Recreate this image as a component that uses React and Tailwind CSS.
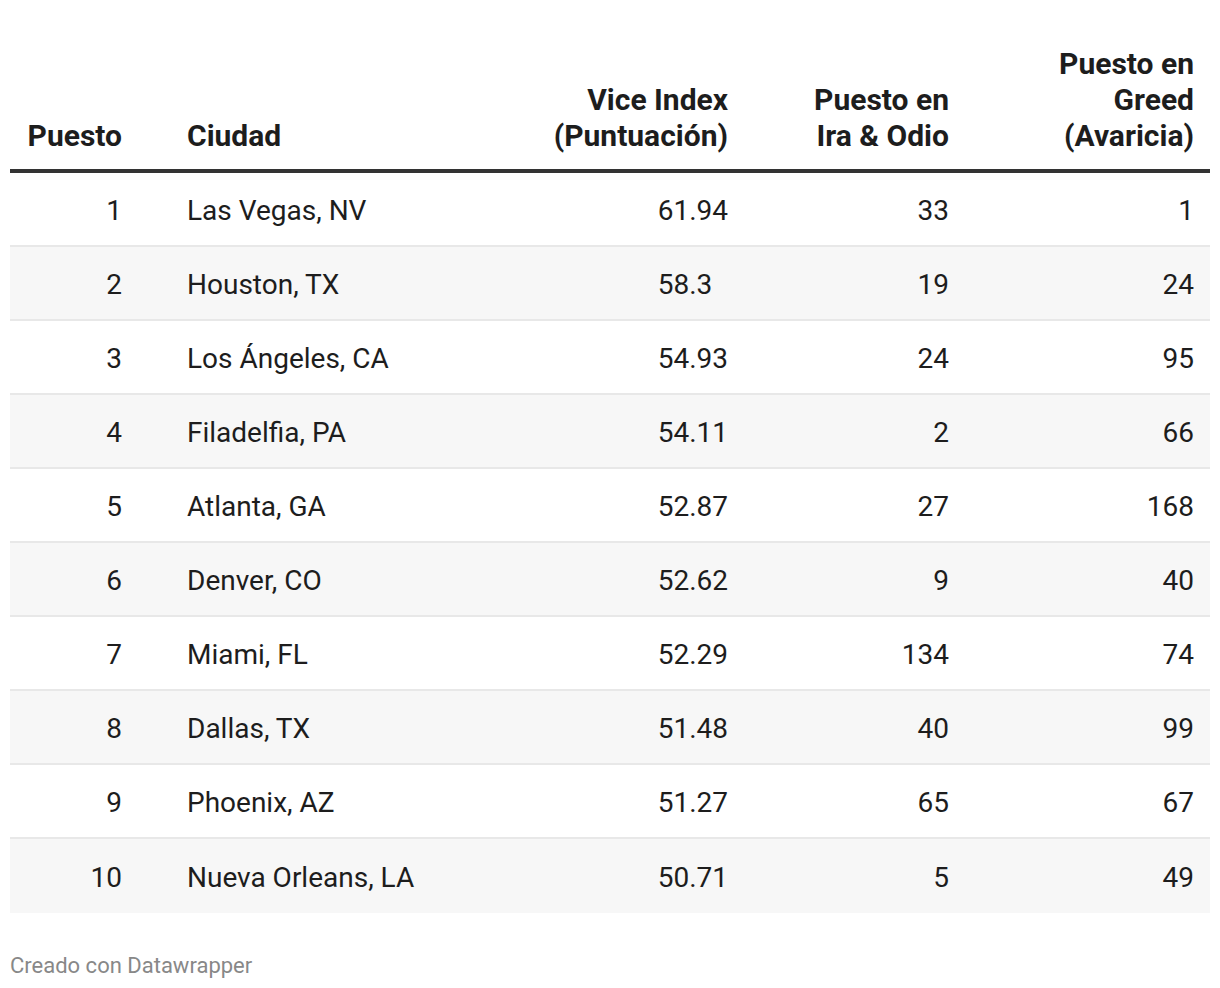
import React from 'react';

const rows = [
  { puesto: 1, ciudad: 'Las Vegas, NV', vice: '61.94', ira: 33, greed: 1 },
  { puesto: 2, ciudad: 'Houston, TX', vice: '58.3', ira: 19, greed: 24 },
  { puesto: 3, ciudad: 'Los Ángeles, CA', vice: '54.93', ira: 24, greed: 95 },
  { puesto: 4, ciudad: 'Filadelfia, PA', vice: '54.11', ira: 2, greed: 66 },
  { puesto: 5, ciudad: 'Atlanta, GA', vice: '52.87', ira: 27, greed: 168 },
  { puesto: 6, ciudad: 'Denver, CO', vice: '52.62', ira: 9, greed: 40 },
  { puesto: 7, ciudad: 'Miami, FL', vice: '52.29', ira: 134, greed: 74 },
  { puesto: 8, ciudad: 'Dallas, TX', vice: '51.48', ira: 40, greed: 99 },
  { puesto: 9, ciudad: 'Phoenix, AZ', vice: '51.27', ira: 65, greed: 67 },
  { puesto: 10, ciudad: 'Nueva Orleans, LA', vice: '50.71', ira: 5, greed: 49 },
];

const cols = 'grid grid-cols-[128px_382px_224px_221px_245px]';

export default function App() {
  return (
    <div className="bg-white w-[1220px] min-h-[988px] px-[10px] pt-[46px] text-[#1d1d1d] font-['Roboto',sans-serif]">
      {/* HEADER */}
      <div className={`${cols} items-end border-b-4 border-[#333] pb-[15px] text-[30px] font-bold leading-[36px]`}>
        <div className="text-right pr-4">Puesto</div>
        <div className="pl-[49px]">Ciudad</div>
        <div className="text-right pr-4">Vice Index<br />(Puntuación)</div>
        <div className="text-right pr-4">Puesto en<br />Ira &amp; Odio</div>
        <div className="text-right pr-4">Puesto en<br />Greed<br />(Avaricia)</div>
      </div>

      {/* FILAS */}
      <div className="text-[28px] leading-[36px]">
        {rows.map((r, i) => (
          <div
            key={r.puesto}
            className={`${cols} items-center h-[74px] pt-[4px] ${i % 2 === 1 ? 'bg-[#f7f7f7]' : 'bg-white'} ${i < rows.length - 1 ? 'border-b-2 border-[#e8e8e8]' : ''}`}
          >
            <div className="text-right pr-4">{r.puesto}</div>
            <div className="pl-[49px]">{r.ciudad}</div>
            <div className="text-right pr-4">
              {r.vice}
              {r.vice.split('.')[1].length === 1 && <span className="invisible">0</span>}
            </div>
            <div className="text-right pr-4">{r.ira}</div>
            <div className="text-right pr-4">{r.greed}</div>
          </div>
        ))}
      </div>

      {/* FOOTER */}
      <div className="mt-[36px] text-[22px] text-[#888]">Creado con Datawrapper</div>
    </div>
  );
}
